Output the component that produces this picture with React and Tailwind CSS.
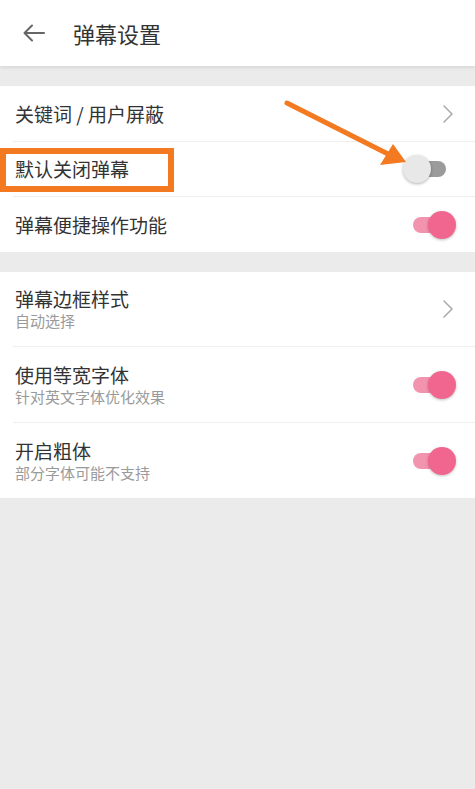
import React from 'react';

const font = { fontFamily: '"Noto Sans CJK SC", "Noto Sans", sans-serif' };

const Chevron = () => (
    <svg width="12" height="20" viewBox="0 0 12 20" fill="none">
        <path d="M2 2 L10 10 L2 18" stroke="#a8a8a8" strokeWidth="1.5" strokeLinecap="round" strokeLinejoin="round" />
    </svg>
);

const Toggle = ({ on }) => (
    <div className="relative w-[53px] h-7">
        {on ? (
            <>
                <div className="absolute left-[10px] right-[6px] top-[6px] h-4 rounded-full bg-[#f394ae]" />
                <div className="absolute right-0 top-0 w-7 h-7 rounded-full bg-[#f0668e] shadow-[0_1px_3px_rgba(0,0,0,0.25)]" />
            </>
        ) : (
            <>
                <div className="absolute left-[14px] right-[10px] top-[6px] h-4 rounded-full bg-[#9b9b9b]" />
                <div className="absolute left-0 top-0 w-7 h-7 rounded-full bg-[#e8e8e8] shadow-[0_1px_3px_rgba(0,0,0,0.3)]" />
            </>
        )}
    </div>
);

const Row = ({ title, sub, right, height, divider, children }) => (
    <div className="relative">
        <div className={`flex items-center justify-between pl-[15px] pr-[19px] ${height}`}>
            <div className="flex flex-col">
                <span className="text-[19px] leading-6 text-[#333]">{title}</span>
                {sub && <span className="text-[15px] leading-5 text-[#9a9a9a]">{sub}</span>}
            </div>
            {right}
        </div>
        {divider && <div className="ml-[13px] h-px bg-[#efefef]" />}
        {children}
    </div>
);

export default function App() {
    return (
        <div className="relative w-[475px] h-[789px] bg-[#ebebeb] overflow-hidden" style={font}>
            <div className="relative z-10 flex items-center h-[66px] bg-white shadow-[0_2px_3px_rgba(0,0,0,0.08)]">
                <svg className="ml-[23px]" width="22" height="18" viewBox="0 0 22 18" fill="none">
                    <path d="M21 9 H2 M9 1.5 L1.5 9 L9 16.5" stroke="#666" strokeWidth="2" strokeLinecap="round" strokeLinejoin="round" />
                </svg>
                <span className="ml-[28px] text-[22px] text-[#333]">弹幕设置</span>
            </div>

            <div className="mt-5 bg-white">
                <Row title="关键词 / 用户屏蔽" height="h-[55px]" divider right={<div className="pr-[2px]"><Chevron /></div>} />
                <Row title="默认关闭弹幕" height="h-[54px]" divider right={<Toggle on={false} />}>
                    <div className="absolute left-0 top-[6px] w-[174px] h-[44px] border-[6px] border-[#f47a22]" />
                </Row>
                <Row title="弹幕便捷操作功能" height="h-[55px]" right={<Toggle on />} />
            </div>

            <div className="mt-5 bg-white">
                <Row title="弹幕边框样式" sub="自动选择" height="h-[74px]" divider right={<div className="pr-[2px]"><Chevron /></div>} />
                <Row title="使用等宽字体" sub="针对英文字体优化效果" height="h-[75px]" divider right={<Toggle on />} />
                <Row title="开启粗体" sub="部分字体可能不支持" height="h-[75px]" right={<Toggle on />} />
            </div>

            <svg className="absolute left-0 top-0 pointer-events-none" width="475" height="789">
                <line x1="287" y1="103" x2="388" y2="154" stroke="#f47a22" strokeWidth="5" strokeLinecap="round" />
                <polygon points="406,162 380,165 393,144" fill="#f47a22" />
            </svg>
        </div>
    );
}
